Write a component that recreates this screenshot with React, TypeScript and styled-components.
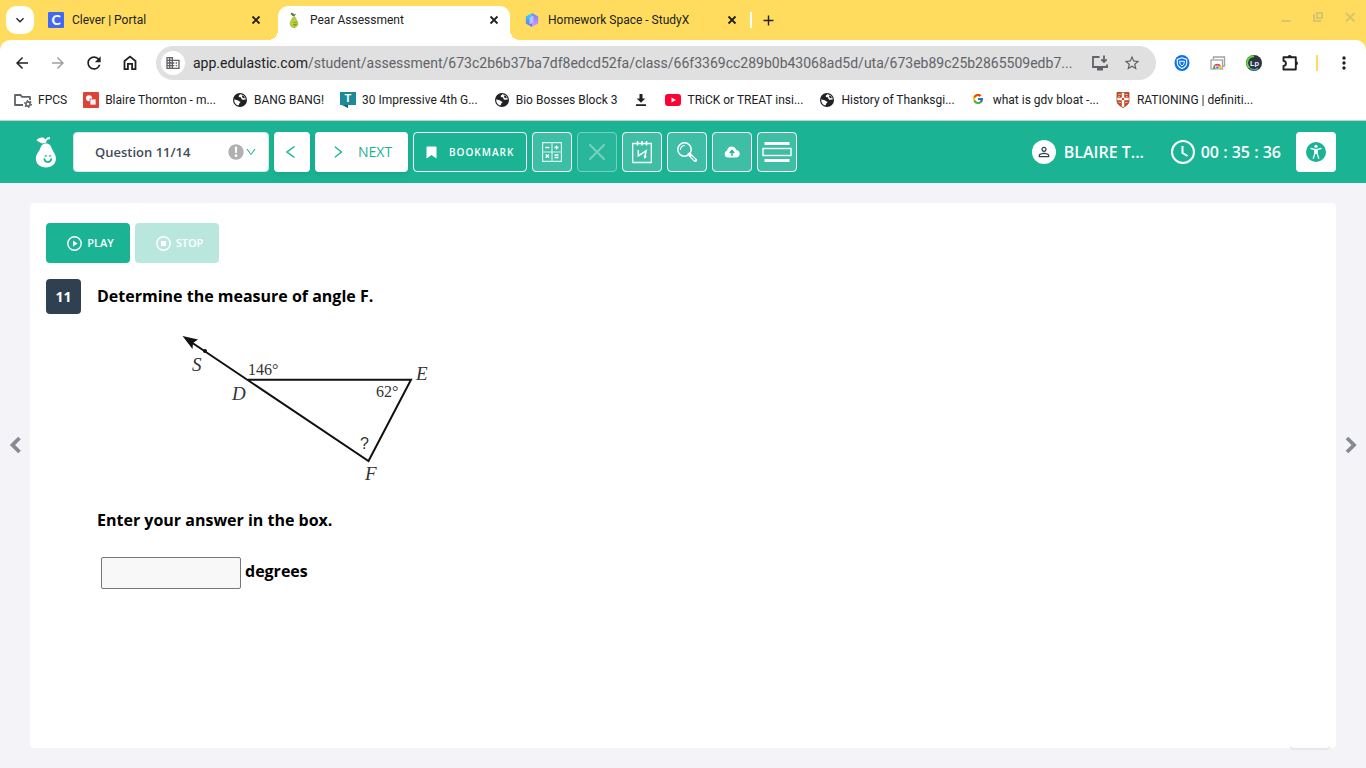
import React from "react";
import styled, { createGlobalStyle, css } from "styled-components";
import {
  MdAdd,
  MdArrowBack,
  MdArrowForward,
  MdBusiness,
  MdKeyboardArrowDown,
  MdMoreVert,
  MdRefresh,
  MdStarOutline,
  MdPersonOutline,
} from "react-icons/md";
import { FcGoogle } from "react-icons/fc";
import { AiOutlineDown, AiOutlineRight } from "react-icons/ai";

const GREEN = "#1ab394";
const YELLOW = "#ffdc5e";
const INK = "#202124";

const GlobalStyle = createGlobalStyle`
  *, *::before, *::after { box-sizing: border-box; }
  body { margin: 0; background: #f3f3f8; font-family: "Open Sans", sans-serif; }
  button, input, select { font-family: inherit; }
  button { border: 0; padding: 0; background: none; cursor: pointer; }
  svg { display: block; flex: none; }
`;

const Page = styled.div`
  display: flex;
  flex-direction: column;
  min-height: 100vh;
`;

/* Browser frame */

const TabStrip = styled.div`
  display: flex;
  height: 40px;
  padding: 6px 6px 0;
  background: ${YELLOW};
  font-family: Roboto, sans-serif;
  color: ${INK};
`;

const TabSearch = styled.button`
  display: grid;
  place-items: center;
  width: 28px;
  height: 28px;
  margin-right: 6px;
  border-radius: 10px;
  background: #fff;
  color: ${INK};
`;

const TabList = styled.div`
  display: flex;
  gap: 6px;
  min-width: 0;
`;

const Tab = styled.div<{ $active?: boolean }>`
  position: relative;
  display: flex;
  align-items: center;
  gap: 8px;
  flex: 0 1 232px;
  width: 232px;
  height: 34px;
  padding: 0 8px 6px;
  font-size: 12px;
  line-height: 16px;
  ${(p) =>
    p.$active &&
    css`
      background: #fff;
      border-radius: 10px 10px 0 0;
      &::before,
      &::after {
        content: "";
        position: absolute;
        bottom: 0;
        width: 10px;
        height: 10px;
      }
      &::before {
        right: 100%;
        background: radial-gradient(circle at 0 0, transparent 10px, #fff 10px);
      }
      &::after {
        left: 100%;
        background: radial-gradient(circle at 100% 0, transparent 10px, #fff 10px);
      }
    `}
`;

const TabTitle = styled.span`
  flex: 1;
  overflow: hidden;
  white-space: nowrap;
`;

const PlainButton = styled.button<{ $size: number }>`
  display: grid;
  place-items: center;
  width: ${(p) => p.$size}px;
  height: ${(p) => p.$size}px;
  color: inherit;
`;

const StripDivider = styled.span`
  width: 2px;
  height: 16px;
  margin: 6px 2px 0;
  background: #fff;
`;

const WindowControls = styled.div`
  display: flex;
  gap: 16px;
  margin: 3px 2px 0 auto;
  color: #d8c66c;
`;

const ToolbarBack = styled.div`
  background: ${YELLOW};
`;

const Toolbar = styled.div`
  display: flex;
  align-items: center;
  height: 46px;
  padding: 0 4px;
  border-radius: 10px 10px 0 0;
  background: #fff;
  color: ${INK};
`;

const ToolButton = styled.button<{ $dim?: boolean }>`
  display: grid;
  place-items: center;
  width: 36px;
  height: 36px;
  flex: none;
  color: ${(p) => (p.$dim ? "#a0a0a1" : INK)};
`;

const AddressBar = styled.div`
  display: flex;
  align-items: center;
  flex: 1;
  min-width: 0;
  height: 34px;
  margin: 0 8px;
  padding: 0 8px 0 5px;
  border-radius: 17px;
  background: #e0e0e0;
  font: 14px/20px Roboto, sans-serif;
  color: #5f6368;
`;

const SiteBadge = styled.span`
  display: grid;
  place-items: center;
  width: 24px;
  height: 24px;
  margin-right: 8px;
  border-radius: 50%;
  background: #fff;
`;

const Url = styled.span`
  flex: 1;
  overflow: hidden;
  white-space: nowrap;
  b {
    font-weight: 400;
    color: ${INK};
  }
`;

const AddressAction = styled.button`
  display: grid;
  place-items: center;
  width: 32px;
  height: 32px;
  color: #5f6368;
`;

const ToolbarDivider = styled.span`
  width: 2px;
  height: 16px;
  margin: 0 8px;
  background: ${YELLOW};
`;

const Bookmarks = styled.nav`
  display: flex;
  align-items: center;
  gap: 16px;
  height: 35px;
  padding: 0 14px 6px;
  border-bottom: 1px solid #c8cfcd;
  background: #fff;
  overflow: hidden;
`;

const BookmarkLink = styled.a`
  display: flex;
  align-items: center;
  gap: 6px;
  flex: none;
  font: 12px/16px Roboto, sans-serif;
  color: ${INK};
  text-decoration: none;
  white-space: nowrap;
`;

/* Assessment header */

const Header = styled.header`
  display: flex;
  align-items: center;
  gap: 5px;
  height: 62px;
  padding: 0 30px;
  background: ${GREEN};
`;

const LogoLink = styled.a`
  display: flex;
  justify-content: center;
  width: 32px;
  margin-right: 6px;
`;

const QuestionPicker = styled.label`
  position: relative;
  width: 196px;
`;

const QuestionSelect = styled.select`
  appearance: none;
  display: block;
  width: 100%;
  height: 40px;
  padding: 0 44px 0 21px;
  border: 1px solid #d9e6e3;
  border-radius: 4px;
  background: #fff;
  font-size: 13px;
  font-weight: 600;
  color: #434b5d;
`;

const PickerIcons = styled.span`
  position: absolute;
  top: 12px;
  right: 12px;
  display: flex;
  align-items: center;
  gap: 1px;
  color: #b0b0b0;
  pointer-events: none;
  svg:last-child {
    color: ${GREEN};
  }
`;

const NavButton = styled.button`
  display: flex;
  align-items: center;
  justify-content: center;
  gap: 12px;
  height: 40px;
  padding: 0 13px 0 11px;
  border-radius: 4px;
  background: #fff;
  box-shadow: 0 2px 4px rgba(0, 0, 0, 0.08);
  font-size: 14px;
  line-height: 20px;
  color: ${GREEN};
`;

const NextButton = styled(NavButton)`
  padding: 0 16px 0 15px;
`;

const BookmarkButton = styled.button`
  display: flex;
  align-items: center;
  justify-content: center;
  gap: 12px;
  width: 114px;
  height: 40px;
  border: 1px solid #fff;
  border-radius: 4px;
  font-size: 10px;
  font-weight: 600;
  letter-spacing: 1px;
  line-height: 16px;
  color: #fff;
`;

const ToolTile = styled.button`
  display: grid;
  place-items: center;
  width: 40px;
  height: 40px;
  flex: none;
  border: 1px solid #fff;
  border-radius: 4px;
  background: rgba(255, 255, 255, 0.16);
  color: #fff;
  &:disabled {
    opacity: 0.4;
  }
`;

const HeaderInfo = styled.div`
  display: flex;
  align-items: center;
  margin-left: auto;
  font-size: 16px;
  font-weight: 600;
  line-height: 24px;
  color: #fff;
  white-space: nowrap;
`;

const Avatar = styled.span`
  display: grid;
  place-items: center;
  width: 24px;
  height: 24px;
  margin-right: 8px;
  border-radius: 50%;
  background: #fff;
  color: #2f4151;
`;

const UserName = styled.span`
  width: 80px;
  margin-right: 27px;
`;

const Timer = styled.span`
  display: flex;
  gap: 6px;
  margin-right: 15px;
`;

const AccessButton = styled.button`
  display: grid;
  place-items: center;
  width: 40px;
  height: 40px;
  border-radius: 4px;
  background: #fff;
`;

/* Question area */

const Workspace = styled.main`
  display: grid;
  grid-template-columns: 30px minmax(0, 1fr) 30px;
  flex: 1;
  padding: 20px 0;
`;

const SideNav = styled.button`
  display: grid;
  place-items: center;
  padding-bottom: 62px;
  color: #878a91;
`;

const Card = styled.section`
  position: relative;
  padding: 20px 16px;
  border-radius: 4px;
  background: #fff;
`;

const DrawerEdge = styled.span`
  position: absolute;
  right: 6px;
  bottom: 0;
  width: 40px;
  height: 8px;
  border-radius: 0 0 4px 4px;
  background: #fff;
  box-shadow: 0 2px 0 #e6e6ec;
`;

const AudioBar = styled.div`
  display: flex;
  gap: 5px;
  margin-bottom: 16px;
`;

const AudioButton = styled.button`
  display: flex;
  align-items: center;
  justify-content: center;
  gap: 5px;
  width: 84px;
  height: 40px;
  padding-left: 5px;
  border-radius: 4px;
  background: ${GREEN};
  font-size: 11px;
  font-weight: 600;
  line-height: 16px;
  color: #fff;
  &:disabled {
    opacity: 0.3;
  }
`;

const QuestionRow = styled.div`
  display: flex;
  align-items: flex-start;
  gap: 16px;
`;

const QuestionNumber = styled.span`
  display: grid;
  place-items: center;
  width: 35px;
  height: 35px;
  border-radius: 4px;
  background: #2f4151;
  font-size: 14px;
  font-weight: 700;
  color: #fff;
`;

const QuestionBody = styled.div`
  flex: 1;
  font-size: 16px;
  font-weight: 700;
  line-height: 24px;
  color: #000;
`;

const Prompt = styled.p`
  margin: 0;
  padding: 5px 0 12px;
`;

const Instruction = styled.p`
  margin: 0;
  padding: 8px 0 25px;
`;

const AnswerLabel = styled.label`
  display: flex;
  align-items: flex-start;
  gap: 4px;
  padding-left: 4px;
  line-height: 28px;
`;

const AnswerInput = styled.input`
  width: 140px;
  height: 32px;
  padding: 0 8px;
  border: 1px solid #767676;
  border-radius: 2px;
  background: #f8f8f8;
  font-size: 16px;
`;

/* Drawings */

const CleverIcon = () => (
  <svg width="16" height="16" viewBox="0 0 16 16">
    <rect width="16" height="16" rx="1" fill="#4169f5" />
    <text x="8" y="13" textAnchor="middle" fontFamily="Lato, sans-serif" fontWeight="900" fontSize="14" fill="#fff">C</text>
  </svg>
);

const PearIcon = () => (
  <svg width="16" height="16" viewBox="0 0 16 16">
    <path d="M8 5c1.300 0 1.700 1 2 2.200.3 1.200 1.800 2.200 1.800 4.400 0 2.300-1.600 3.900-3.800 3.900s-3.800-1.600-3.800-3.900c0-2.200 1.500-3.200 1.800-4.400C6.300 6 6.700 5 8 5Z" fill="#bccf35" stroke="#8fa52a" strokeWidth=".7" />
    <path d="M5 1.500c2-.6 3 .2 3.200 1.800-1.800.6-3 0-3.200-1.800ZM8 4.500V3.300L9.800 2" fill="#57803a" stroke="#57803a" strokeWidth=".8" />
    <path d="M7.500 12.300c.6 1.200 2.200 1.200 2.800 0" fill="none" stroke="#55702a" />
    <path d="M7.700 10.500h.8M9.500 10.500h.8" stroke="#55702a" />
  </svg>
);

const StudyIcon = () => (
  <svg width="16" height="16" viewBox="0 0 16 16">
    <defs>
      <linearGradient id="studyLeft" x1="0" y1="0" x2="0" y2="1">
        <stop offset="0" stopColor="#2fe0f5" />
        <stop offset="1" stopColor="#6a6cf5" />
      </linearGradient>
      <linearGradient id="studyRight" x1="0" y1="0" x2="0" y2="1">
        <stop offset="0" stopColor="#6f7dfb" />
        <stop offset="1" stopColor="#d79bf5" />
      </linearGradient>
    </defs>
    <path d="M8 1L1.800 4.500v7L8 15Z" fill="url(#studyLeft)" />
    <path d="M8 1l6.200 3.500v7L8 15Z" fill="url(#studyRight)" />
    <path d="M5.500 5.500L9.500 3.500v7L5.500 12.500Z" fill="#c9c6ff" opacity=".85" />
  </svg>
);

const TabCloseIcon = () => (
  <svg width="16" height="16" viewBox="0 0 16 16"><path d="M4.500 4.500l7 7M11.500 4.500l-7 7" stroke="currentColor" strokeWidth="1.800" /></svg>
);

const MinimizeIcon = () => (
  <svg width="16" height="16" viewBox="0 0 16 16"><path d="M3.500 12h9" stroke="currentColor" strokeWidth="2" /></svg>
);
const RestoreIcon = () => (
  <svg width="16" height="16" viewBox="0 0 16 16" fill="none" stroke="currentColor" strokeWidth="2">
    <path d="M7 4h5v5H7ZM4 5v7h7" />
  </svg>
);
const WindowCloseIcon = () => (
  <svg width="16" height="16" viewBox="0 0 16 16"><path d="M4 4l8.500 8.500M12.500 4L4 12.500" stroke="currentColor" strokeWidth="2" /></svg>
);

const HomeIcon = () => (
  <svg width="20" height="20" viewBox="0 0 20 20" fill="none" stroke="currentColor" strokeWidth="1.800">
    <path d="M4.500 8L10 3.600 15.500 8v8.200h-3.400v-5.400H7.900v5.400H4.500Z" />
  </svg>
);

const InstallIcon = () => (
  <svg width="18" height="18" viewBox="0 0 18 18" fill="none" stroke="currentColor" strokeWidth="1.800">
    <path d="M8.500 3H2v10h14v-2.500" />
    <path d="M13 1.500v6M10.300 5.300L13 8l2.700-2.700" />
    <path d="M6 15.200h6" strokeWidth="2.600" />
  </svg>
);

const ShieldExtension = () => (
  <svg width="16" height="16" viewBox="0 0 16 16">
    <ellipse cx="8" cy="8" rx="7.500" ry="8" fill="#0b72f0" />
    <path d="M8 2.800l4.700 1.700V8c0 2.700-2.200 4.500-4.700 5.500C5.500 12.500 3.300 10.700 3.300 8V4.500Z" fill="none" stroke="#fff" strokeWidth="1.100" />
    <path d="M5.500 6.300h5l-.7 2.900L8 11l-1.800-1.800Z" fill="none" stroke="#fff" />
  </svg>
);

const CastExtension = () => (
  <svg width="16" height="16" viewBox="0 0 16 16">
    <path d="M3.500 4V2h11v9h-2" fill="none" stroke="#a3a3a3" strokeWidth="1.400" />
    <rect x="1" y="5" width="11.500" height="9" fill="#fff" stroke="#a3a3a3" strokeWidth="1.300" />
    <path d="M3 13.800a4.200 4.200 0 0 1 1.200-3.500l2.500 3.500Z" fill="#34a853" />
    <path d="M3.600 10.800a4.200 4.200 0 0 1 7.400.200Z" fill="#ea4335" />
    <path d="M8 10.900h3a4.200 4.200 0 0 1 .3 2.900H8Z" fill="#fbbc04" />
    <circle cx="7.300" cy="12.600" r="1.700" fill="#4285f4" stroke="#fff" strokeWidth=".6" />
  </svg>
);

const LearningExtension = () => (
  <svg width="16" height="16" viewBox="0 0 16 16">
    <circle cx="8" cy="8" r="8" fill="#2d3440" />
    <path d="M3.500 13A6.600 6.600 0 0 1 8 1.400" fill="none" stroke="#5ee02f" strokeWidth="1.800" />
    <path d="M4 13.300a6.600 6.600 0 0 0 8 0" fill="none" stroke="#4aa3a8" strokeWidth="1.500" />
    <text x="8.500" y="11" textAnchor="middle" fontFamily="Roboto, sans-serif" fontWeight="500" fontSize="8" fill="#fff">Lp</text>
  </svg>
);

const PuzzleIcon = () => (
  <svg width="20" height="20" viewBox="0 0 20 20" fill="none" stroke="currentColor" strokeWidth="1.900" strokeLinejoin="round">
    <path d="M3.500 4.200h12.300v12.300H3.500v-3.600c3.200-.3 3.200-4.700 0-5Z" />
    <path d="M7.700 4a2 2 0 0 1 4 0ZM16 8.300a2 2 0 0 1 0 4Z" fill="currentColor" stroke="none" />
  </svg>
);

const FolderIcon = () => (
  <svg width="18" height="16" viewBox="0 0 18 16" fill="none" stroke="#5f6368">
    <path d="M9 13H1V3h5.500l1.500 1.800h8V8" strokeWidth="1.800" strokeLinejoin="round" />
    <path d="M1 2h6v2H1Z" fill="#5f6368" stroke="none" />
    <circle cx="14" cy="12" r="2.100" strokeWidth="1.600" />
    <circle cx="14" cy="12" r="3.400" strokeWidth="1.200" strokeDasharray="1.600 1.960" />
  </svg>
);

const GlobeIcon = () => (
  <svg width="16" height="16" viewBox="0 0 16 16">
    <circle cx="8" cy="8" r="7" fill={INK} />
    <path d="M2.300 7.200c1.500 1 3.500.3 4.200 1.600.4.900 1.700.400 1.900 1.300.1.700-1.300 1-1.400 2.300-.1.900-.9 1.200-1.600.8A6 6 0 0 1 2.300 7.200Z" fill="#fff" />
    <path d="M8.200 2.200c-.4 1-1.800 1.100-1.500 2.200.3 1 1.700.4 2.300 1.200.5.800.2 1.800 1.300 2.100 1.200.3 2.200-.7 3.500 0A5.800 5.800 0 0 0 8.200 2.200Z" fill="#fff" />
    <path d="M9.800 3.600c1.600-.2 2.800 1 3 2.300-1.200.6-2.200-.1-2.600-.8Z" fill={INK} />
  </svg>
);

const DrawingsIcon = () => (
  <svg width="16" height="16" viewBox="0 0 16 16">
    <rect width="16" height="16" rx="1" fill="#db4437" />
    <circle cx="6" cy="6.200" r="3" fill="#fff" />
    <rect x="7" y="7" width="6" height="6" fill="#fff" stroke="#db4437" strokeWidth=".8" />
  </svg>
);

const TeachIcon = () => (
  <svg width="16" height="16" viewBox="0 0 16 16">
    <path d="M0 0h16v13H8v3l-4-3H0Z" fill="#1d8a99" />
    <path d="M2 13h6v3Z" fill="#126470" />
    <text x="8" y="10" textAnchor="middle" fontFamily="Roboto, sans-serif" fontWeight="700" fontSize="11" fill="#fff">T</text>
  </svg>
);

const SaveIcon = () => (
  <svg width="16" height="16" viewBox="0 0 16 16" fill={INK}>
    <path d="M6.500 2h3v4.500h2.800L8 10.800 3.700 6.500h2.800ZM3 12.300h10V14H3Z" />
  </svg>
);

const VideoIcon = () => (
  <svg width="16" height="16" viewBox="0 0 16 16">
    <rect y="2" width="16" height="12" rx="3" fill="#ff0033" />
    <path d="M6.500 5.500L11 8l-4.500 2.500Z" fill="#fff" />
  </svg>
);

const GoogleIcon = () => (
  <svg width="16" height="16" viewBox="0 0 16 16">
    <FcGoogle x="1" y="1" width="14" height="14" />
  </svg>
);

const CrestIcon = () => (
  <svg width="16" height="16" viewBox="0 0 16 16">
    <path d="M2 .5h12V9c0 3-3 5-6 6.500C5 14 2 12 2 9Z" fill="#d0442f" stroke="#8d4a3a" strokeWidth=".8" />
    <path d="M8 .8v14M2.300 7h11.400" stroke="#fff" strokeWidth="2.400" />
    <path d="M3.300 2.500h2.500M10.200 2.500h2.500M3.500 10.500h2.500M10 10.500h2.500M3.300 4.500h1.500M11 4.500h1.500" stroke="#f2c14e" strokeWidth="1.200" />
    <rect x="7" y="6" width="2" height="2" fill="#d0442f" />
  </svg>
);

const PearLogo = () => (
  <svg width="22" height="32" viewBox="0 0 22 32">
    <path d="M11 7.500c3.600 0 5 2.500 5.900 5.200 1 3 4 5 4 9.800 0 5.300-4 9-10 9S.900 27.800.900 22.500c0-4.800 3.200-6.800 4.200-9.800C6 10 7.400 7.500 11 7.500Z" fill="#fff" />
    <path d="M1.500 4.300C4 1 9 .6 10.300 3.400L12.300 1.600 15 1l-.3 2-3 1.300-.6 2.500-2.200.5C6 8 3.800 5.800 1.500 4.300Z" fill="#fff" />
    <path d="M9.300 23c.8 4 6.200 4 7 0" fill="none" stroke={GREEN} strokeWidth="1.700" strokeLinecap="round" />
    <path d="M10 20.500c0-1.200 1.600-1.200 1.600 0M14.300 20.500c0-1.200 1.600-1.200 1.600 0" fill="none" stroke={GREEN} strokeWidth="1.200" />
  </svg>
);

const AlertIcon = () => (
  <svg width="16" height="16" viewBox="0 0 16 16">
    <circle cx="8" cy="8" r="7.700" fill="currentColor" />
    <path d="M6.800 2.800h2.400l-.4 6.200H7.200Z" fill="#fff" />
    <circle cx="8" cy="11.700" r="1.400" fill="#fff" />
  </svg>
);

const PreviousIcon = () => (
  <svg width="12" height="14" viewBox="0 0 12 14"><path d="M9.500 1.500L2 7l7.500 5.500" fill="none" stroke="currentColor" strokeWidth="1.500" /></svg>
);

const FlagIcon = () => (
  <svg width="11" height="13" viewBox="0 0 11 13"><path d="M.5 1.500Q.5.500 1.500.500h8q1 0 1 1v11l-5-3.500-5 3.500Z" fill="currentColor" /></svg>
);

const CalculatorIcon = () => (
  <svg width="20" height="20" viewBox="0 0 20 20" fill="none" stroke="currentColor">
    <path d="M.6.600h18.800v18.800H.6ZM10 .600v18.800M.600 10h18.800" strokeWidth="1.200" opacity=".8" />
    <path d="M3.300 5.500h4M12.500 5.500h4M14.500 3.500v4M3.700 12.500l3.300 3.300M7 12.500l-3.300 3.300M12.500 13h4M12.500 15.500h4" strokeWidth="1.300" />
  </svg>
);

const CrossIcon = () => (
  <svg width="16" height="16" viewBox="0 0 16 16"><path d="M1 1l14 14M15 1L1 15" stroke="currentColor" strokeWidth="2" strokeLinecap="round" /></svg>
);

const NotepadIcon = () => (
  <svg width="20" height="24" viewBox="0 0 20 24" fill="none" stroke="currentColor" strokeWidth="1.300">
    <path d="M.7 3.500h18.600v19H.7Z" />
    <path d="M5.500 1v4.500M10 1v4.500M14.500 1v4.500" strokeWidth="1.500" />
    <path d="M6.300 10v5.800l7.700-5-1.300 7" strokeWidth="1.500" />
    <path d="M12.200 15.500l.5 2.300 1.600-1.600" />
  </svg>
);

const MagnifierIcon = () => (
  <svg width="20" height="20" viewBox="0 0 20 20" fill="none" stroke="currentColor">
    <circle cx="7.500" cy="7.500" r="6.700" strokeWidth="1.500" />
    <path d="M3.500 8A4 4 0 0 1 8 3.500" strokeWidth="1.100" />
    <path d="M12.300 12.300l6 6" strokeWidth="3.600" strokeLinecap="round" />
    <path d="M14.300 14.300l3.700 3.700" stroke="#3fbfa6" strokeWidth="1.200" />
  </svg>
);

const CloudIcon = () => (
  <svg width="16" height="12" viewBox="0 0 16 12">
    <path d="M4 11.500a3.500 3.500 0 0 1-1-6.800C3.500 2 5.300.5 7.700.5c2.300 0 4 1.400 4.500 3.500 2 .1 3.500 1.700 3.500 3.700 0 2.200-1.600 3.800-3.800 3.800Z" fill="#fff" />
    <path d="M8 10V4.800M5.700 6.900L8 4.600l2.300 2.300" fill="none" stroke={GREEN} strokeWidth="1.400" />
  </svg>
);

const LineReaderIcon = () => (
  <svg width="30" height="20" viewBox="0 0 30 20" fill="none" stroke="currentColor">
    <path d="M2.500 1.500h25M2.500 18.500h25" strokeWidth="3" />
    <rect x="1" y="6.500" width="28" height="7" strokeWidth="1.400" />
  </svg>
);

const ClockIcon = () => (
  <svg width="24" height="24" viewBox="0 0 24 24" fill="none" stroke="currentColor" strokeWidth="2">
    <circle cx="12" cy="12" r="11" />
    <path d="M11.500 6v7l5 3" />
  </svg>
);

const AccessIcon = () => (
  <svg width="20" height="20" viewBox="0 0 20 20">
    <circle cx="10" cy="10" r="10" fill={GREEN} />
    <circle cx="10" cy="4.300" r="1.600" fill="#fff" />
    <path d="M5 6.500L9 7.600v3.600L7.300 16.300M15 6.500l-4 1.100v3.600l1.700 5.100" fill="none" stroke="#fff" strokeWidth="1.300" strokeLinecap="round" />
    <path d="M8.400 7.200h3.200v4.600H8.400Z" fill="#fff" />
  </svg>
);

const SideChevron = ({ flip }: { flip?: boolean }) => (
  <svg width="12" height="18" viewBox="0 0 12 18" fill="none" stroke="currentColor" strokeWidth="3.800">
    <path d={flip ? "M2 2l7 7-7 7" : "M10.500 2l-7 7 7 7"} />
  </svg>
);

const PlayIcon = () => (
  <svg width="15" height="15" viewBox="0 0 15 15">
    <circle cx="7.500" cy="7.500" r="6.700" fill="none" stroke="currentColor" strokeWidth="1.400" />
    <path d="M6 4.500l4.500 3-4.500 3Z" fill="currentColor" />
  </svg>
);

const StopIcon = () => (
  <svg width="15" height="15" viewBox="0 0 15 15">
    <circle cx="7.500" cy="7.500" r="6.700" fill="none" stroke="currentColor" strokeWidth="1.400" />
    <rect x="5" y="5" width="5" height="5" fill="currentColor" />
  </svg>
);

const TriangleFigure = () => (
  <svg width="360" height="180" viewBox="97 320 360 180" role="img" aria-label="Triangle DEF with an exterior angle of 146° at D">
    <g fill="none" stroke="#111" strokeWidth="2">
      <path d="M188 340L368.500 461 411 379.700H248" />
    </g>
    <path d="M182.500 336l15.500 3.500-5 3.500-.5 6Z" fill="#111" />
    <circle cx="205" cy="351" r="2" fill="#111" />
    <g fontFamily="Liberation Serif, serif" fill="#333" fontWeight="400">
      <g fontStyle="italic" fontSize="19">
        <text x="192" y="371">S</text>
        <text x="232" y="400">D</text>
        <text x="416" y="380">E</text>
        <text x="365" y="480">F</text>
      </g>
      <text x="248" y="375" fontSize="16">146°</text>
      <text x="376" y="397" fontSize="16">62°</text>
      <text x="360" y="449" fontSize="16" fontFamily="Liberation Sans, sans-serif">?</text>
    </g>
  </svg>
);

const tabs = [
  { title: "Clever | Portal", icon: <CleverIcon /> },
  { title: "Pear Assessment", icon: <PearIcon />, active: true },
  { title: "Homework Space - StudyX", icon: <StudyIcon /> },
];

const bookmarks = [
  { label: "FPCS", icon: <FolderIcon /> },
  { label: "Blaire Thornton - m...", icon: <DrawingsIcon /> },
  { label: "BANG BANG!", icon: <GlobeIcon /> },
  { label: "30 Impressive 4th G...", icon: <TeachIcon /> },
  { label: "Bio Bosses Block 3", icon: <GlobeIcon /> },
  { label: "", icon: <SaveIcon /> },
  { label: "TRiCK or TREAT insi...", icon: <VideoIcon /> },
  { label: "History of Thanksgi...", icon: <GlobeIcon /> },
  { label: "what is gdv bloat -...", icon: <GoogleIcon /> },
  { label: "RATIONING | definiti...", icon: <CrestIcon /> },
];

export default function App() {
  return (
    <Page>
      <GlobalStyle />
      <TabStrip>
        <TabSearch aria-label="Search tabs"><MdKeyboardArrowDown size={16} /></TabSearch>
        <TabList>
          {tabs.map((tab) => (
            <Tab key={tab.title} $active={tab.active}>
              {tab.icon}
              <TabTitle>{tab.title}</TabTitle>
              <PlainButton $size={16} aria-label="Close tab"><TabCloseIcon /></PlainButton>
            </Tab>
          ))}
        </TabList>
        <StripDivider />
        <PlainButton $size={28} aria-label="New tab"><MdAdd size={17} /></PlainButton>
        <WindowControls>
          <PlainButton $size={16} aria-label="Minimize"><MinimizeIcon /></PlainButton>
          <PlainButton $size={16} aria-label="Restore"><RestoreIcon /></PlainButton>
          <PlainButton $size={16} aria-label="Close window"><WindowCloseIcon /></PlainButton>
        </WindowControls>
      </TabStrip>

      <ToolbarBack>
        <Toolbar>
          <ToolButton aria-label="Back"><MdArrowBack size={18} /></ToolButton>
          <ToolButton aria-label="Forward" $dim><MdArrowForward size={18} /></ToolButton>
          <ToolButton aria-label="Reload"><MdRefresh size={20} /></ToolButton>
          <ToolButton aria-label="Home"><HomeIcon /></ToolButton>
          <AddressBar>
            <SiteBadge><MdBusiness size={16} /></SiteBadge>
            <Url>
              <b>app.edulastic.com</b>
              /student/assessment/673c2b6b37ba7df8edcd52fa/class/66f3369cc289b0b43068ad5d/uta/673eb89c25b2865509edb7...
            </Url>
            <AddressAction aria-label="Install app"><InstallIcon /></AddressAction>
            <AddressAction aria-label="Bookmark this tab"><MdStarOutline size={18} /></AddressAction>
          </AddressBar>
          <ToolButton aria-label="Shield extension"><ShieldExtension /></ToolButton>
          <ToolButton aria-label="Cast extension"><CastExtension /></ToolButton>
          <ToolButton aria-label="Learning extension"><LearningExtension /></ToolButton>
          <ToolButton aria-label="Extensions"><PuzzleIcon /></ToolButton>
          <ToolbarDivider />
          <ToolButton aria-label="Browser menu"><MdMoreVert size={20} /></ToolButton>
        </Toolbar>
      </ToolbarBack>

      <Bookmarks aria-label="Bookmarks">
        {bookmarks.map((b, i) => (
          <BookmarkLink key={i} href="#" aria-label={b.label || "Save"}>
            {b.icon}
            {b.label && <span>{b.label}</span>}
          </BookmarkLink>
        ))}
      </Bookmarks>

      <Header>
        <LogoLink href="#" aria-label="Pear Assessment"><PearLogo /></LogoLink>
        <QuestionPicker>
          <QuestionSelect defaultValue="11" aria-label="Question">
            <option value="11">Question 11/14</option>
          </QuestionSelect>
          <PickerIcons>
            <AlertIcon />
            <AiOutlineDown size={12} />
          </PickerIcons>
        </QuestionPicker>
        <NavButton aria-label="Previous question"><PreviousIcon /></NavButton>
        <NextButton><AiOutlineRight size={16} />NEXT</NextButton>
        <BookmarkButton><FlagIcon />BOOKMARK</BookmarkButton>
        <ToolTile aria-label="Calculator"><CalculatorIcon /></ToolTile>
        <ToolTile aria-label="Cross out" disabled><CrossIcon /></ToolTile>
        <ToolTile aria-label="Scratchpad"><NotepadIcon /></ToolTile>
        <ToolTile aria-label="Magnify"><MagnifierIcon /></ToolTile>
        <ToolTile aria-label="Upload"><CloudIcon /></ToolTile>
        <ToolTile aria-label="Line reader"><LineReaderIcon /></ToolTile>
        <HeaderInfo>
          <Avatar><MdPersonOutline size={16} /></Avatar>
          <UserName>BLAIRE T...</UserName>
          <Timer><ClockIcon />00 : 35 : 36</Timer>
          <AccessButton aria-label="Accessibility"><AccessIcon /></AccessButton>
        </HeaderInfo>
      </Header>

      <Workspace>
        <SideNav aria-label="Previous"><SideChevron /></SideNav>
        <Card>
          <AudioBar>
            <AudioButton><PlayIcon />PLAY</AudioButton>
            <AudioButton disabled><StopIcon />STOP</AudioButton>
          </AudioBar>
          <QuestionRow>
            <QuestionNumber>11</QuestionNumber>
            <QuestionBody>
              <Prompt>Determine the measure of angle F.</Prompt>
              <TriangleFigure />
              <Instruction>Enter your answer in the box.</Instruction>
              <AnswerLabel>
                <AnswerInput type="text" />
                degrees
              </AnswerLabel>
            </QuestionBody>
          </QuestionRow>
          <DrawerEdge />
        </Card>
        <SideNav aria-label="Next"><SideChevron flip /></SideNav>
      </Workspace>
    </Page>
  );
}
